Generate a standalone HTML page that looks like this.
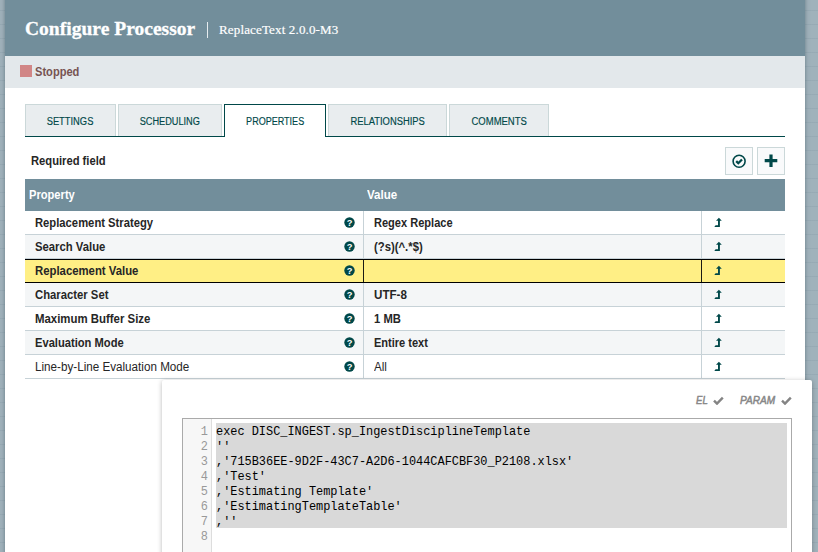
<!DOCTYPE html>
<html>
<head>
<meta charset="utf-8">
<title>Configure Processor</title>
<style>
*{box-sizing:border-box;margin:0;padding:0}
html,body{width:818px;height:552px;overflow:hidden}
body{position:relative;background:#a0b2bb;font-family:"Liberation Sans",sans-serif;font-size:12px;color:#262626}
.abs{position:absolute}
.sx{transform-origin:0 50%;display:inline-block}
#bg{left:0;top:0;width:818px;height:552px;
  background-color:#a0b2bb;
  background-image:linear-gradient(to bottom,rgba(110,132,145,.16) 1px,transparent 1px),linear-gradient(to right,rgba(110,132,145,.16) 1px,transparent 1px);
  background-size:14px 14px;background-position:6px 10px}
#dialog{left:5px;top:-10px;width:800px;height:620px;background:#fff;box-shadow:0 0 4px rgba(50,72,88,.55)}
#hdr{left:5px;top:0;width:800px;height:56px;background:#728e9b}
#title{left:25px;top:16.5px;height:24px;line-height:24px;font-family:"Liberation Serif",serif;font-weight:bold;font-size:19.5px;letter-spacing:0.02px;-webkit-text-stroke:0.3px #fff;color:#fff;white-space:nowrap}
#tdiv{left:207px;top:22px;width:1px;height:16px;background:#e6ecef}
#sub{left:219px;top:20px;height:20px;line-height:20px;font-family:"Liberation Serif",serif;font-size:13px;letter-spacing:0.15px;-webkit-text-stroke:0.2px #fff;color:#fff;white-space:nowrap}
#status{left:5px;top:56px;width:800px;height:32px;background:#e3e8eb}
#stopsq{left:20px;top:65px;width:12px;height:12px;background:#d18686}
#stoptx{left:35px;top:64px;height:16px;line-height:16px;font-weight:bold;font-size:12px;color:#775351;white-space:nowrap}
.tab{position:absolute;top:104px;height:32px;background:#e9edef;border:1px solid #cbd8d9;border-bottom:none;color:#004849;font-size:10px;text-align:center;line-height:33px;-webkit-text-stroke:0.15px #004849;white-space:nowrap;text-transform:uppercase}
.tab.sel{background:#fff;border:1px solid #004849;border-bottom:none;height:33px}
#tabline{left:25px;top:136px;width:760px;height:1px;background:#004849}
#req{left:31px;top:153px;height:16px;line-height:16px;font-weight:bold;font-size:12px;white-space:nowrap}
.btn{position:absolute;top:147px;width:28px;height:28px;background:#f9fafb;border:1px solid #cbd8d9}
#thead{left:25px;top:179px;width:760px;height:32px;background:#728e9b}
.th{position:absolute;transform-origin:0 50%;top:179px;height:32px;line-height:32px;color:#fff;font-weight:bold;font-size:12px;white-space:nowrap}
.row{position:absolute;left:25px;width:760px;height:24px;border-bottom:1px solid #c7d2d7;background:#fff}
.row.odd{background:#f4f6f7}
.row.sel{background:#ffef85;border-top:1px solid #000;border-bottom:1px solid #000}
.row .c{position:absolute;top:1px;transform-origin:0 50%;height:23px;line-height:23px;white-space:nowrap;font-size:12px;font-weight:bold}
.row.sel .c{top:0}
.row .v1,.row .v2{position:absolute;top:0;bottom:0;width:1px;background:#c7d2d7}
.row.sel .v1,.row.sel .v2{background:#1a1a14}
.row .v1{left:338px}
.row .v2{left:676px}
.row .name{left:10px}
.row .val{left:349px}
.row.norm .c{font-weight:normal}
.row svg.q{position:absolute;left:319px;top:6.2px;overflow:visible}
.row.sel svg.q{top:5.2px}
.row svg.up{position:absolute;left:689px;top:6px}
.row.sel svg.up{top:5px}
#pop{left:162px;top:380px;width:650px;height:200px;background:#fff;border-radius:2px;box-shadow:0 1px 5px rgba(0,0,0,.28)}
#ed{left:182px;top:418px;width:610px;height:160px;border:1px solid #aaa;background:#fff}
#gut{left:183px;top:419px;width:29px;height:150px;background:#f7f7f7;border-right:1px solid #ddd}
#selbg{left:216px;top:423px;width:571px;height:105px;background:#d9d9d9}
.ln{position:absolute;left:183px;width:25px;text-align:right;height:15px;line-height:15px;font-family:"Liberation Mono","DejaVu Sans Mono",monospace;font-size:11.91px;color:#999}
.cl{position:absolute;left:216px;height:15px;line-height:15px;font-family:"Liberation Mono","DejaVu Sans Mono",monospace;font-size:11.91px;color:#000;white-space:pre}
.flag{position:absolute;top:392px;height:16px;line-height:16px;font-size:11px;font-style:italic;font-weight:normal;-webkit-text-stroke:0.5px #878787;color:#878787;white-space:nowrap;transform-origin:0 50%}
</style>
</head>
<body>
<div id="bg" class="abs"></div>
<div id="dialog" class="abs"></div>
<div id="hdr" class="abs"></div>
<div id="title" class="abs">Configure Processor</div>
<div id="tdiv" class="abs"></div>
<div id="sub" class="abs">ReplaceText 2.0.0-M3</div>
<div id="status" class="abs"></div>
<div id="stopsq" class="abs"></div>
<div id="stoptx" class="abs sx" style="transform:scaleX(.925)">Stopped</div>

<div class="tab" style="left:25px;width:91px"><span style="display:inline-block;transform:scaleX(0.934)">Settings</span></div>
<div class="tab" style="left:118px;width:104px"><span style="display:inline-block;transform:scaleX(0.918)">Scheduling</span></div>
<div id="tabline" class="abs"></div>
<div class="tab sel" style="left:224px;width:102px"><span style="display:inline-block;transform:scaleX(0.903)">Properties</span></div>
<div class="tab" style="left:328px;width:119px"><span style="display:inline-block;transform:scaleX(0.938)">Relationships</span></div>
<div class="tab" style="left:449px;width:100px"><span style="display:inline-block;transform:scaleX(0.948)">Comments</span></div>

<div id="req" class="abs sx" style="transform:scaleX(.9325)">Required field</div>
<div class="btn" style="left:725px">
 <svg width="26" height="26" viewBox="0 0 26 26" style="position:absolute;left:0;top:0"><circle cx="13.1" cy="13.2" r="6" fill="none" stroke="#004849" stroke-width="1.6"/><path d="M10.2 13.1l2.1 2.1 3.7-3.7" fill="none" stroke="#004849" stroke-width="2.3"/></svg>
</div>
<div class="btn" style="left:757px">
 <svg width="26" height="26" viewBox="0 0 26 26" style="position:absolute;left:0;top:0"><path d="M6.7 12.7h12.6M13 6.4v12.6" fill="none" stroke="#004849" stroke-width="3.2"/></svg>
</div>

<div id="thead" class="abs"></div>
<div class="th" style="left:29px;transform:scaleX(.928)">Property</div>
<div class="th" style="left:367px;transform:scaleX(.96)">Value</div>

<div class="row" style="top:211px"><span class="c name" style="transform:scaleX(0.937)">Replacement Strategy</span><span class="c val" style="transform:scaleX(0.920)">Regex Replace</span><i class="v1"></i><i class="v2"></i>
<svg class="q" width="11" height="11" viewBox="0 0 11 11"><circle cx="5.5" cy="5.5" r="5.2" fill="#004849"/><text x="5.5" y="8.9" font-family="Liberation Sans, sans-serif" font-weight="bold" font-size="9.3" fill="#fff" text-anchor="middle">?</text></svg>
<svg class="up" width="9" height="11" viewBox="0 0 9 11"><path d="M4.9 0.7L7.8 3.8H5.9V9.9H0.3L1.6 8.3H4V3.8H2Z" fill="#004849"/></svg></div>

<div class="row odd" style="top:235px"><span class="c name" style="transform:scaleX(0.941)">Search Value</span><span class="c val" style="transform:scaleX(0.942)">(?s)(^.*$)</span><i class="v1"></i><i class="v2"></i>
<svg class="q" width="11" height="11" viewBox="0 0 11 11"><circle cx="5.5" cy="5.5" r="5.2" fill="#004849"/><text x="5.5" y="8.9" font-family="Liberation Sans, sans-serif" font-weight="bold" font-size="9.3" fill="#fff" text-anchor="middle">?</text></svg>
<svg class="up" width="9" height="11" viewBox="0 0 9 11"><path d="M4.9 0.7L7.8 3.8H5.9V9.9H0.3L1.6 8.3H4V3.8H2Z" fill="#004849"/></svg></div>

<div class="row sel" style="top:259px"><span class="c name" style="transform:scaleX(0.945)">Replacement Value</span><span class="c val"></span><i class="v1"></i><i class="v2"></i>
<svg class="q" width="11" height="11" viewBox="0 0 11 11"><circle cx="5.5" cy="5.5" r="5.2" fill="#004849"/><text x="5.5" y="8.9" font-family="Liberation Sans, sans-serif" font-weight="bold" font-size="9.3" fill="#fff" text-anchor="middle">?</text></svg>
<svg class="up" width="9" height="11" viewBox="0 0 9 11"><path d="M4.9 0.7L7.8 3.8H5.9V9.9H0.3L1.6 8.3H4V3.8H2Z" fill="#004849"/></svg></div>

<div class="row odd" style="top:283px"><span class="c name" style="transform:scaleX(0.941)">Character Set</span><span class="c val" style="transform:scaleX(0.968)">UTF-8</span><i class="v1"></i><i class="v2"></i>
<svg class="q" width="11" height="11" viewBox="0 0 11 11"><circle cx="5.5" cy="5.5" r="5.2" fill="#004849"/><text x="5.5" y="8.9" font-family="Liberation Sans, sans-serif" font-weight="bold" font-size="9.3" fill="#fff" text-anchor="middle">?</text></svg>
<svg class="up" width="9" height="11" viewBox="0 0 9 11"><path d="M4.9 0.7L7.8 3.8H5.9V9.9H0.3L1.6 8.3H4V3.8H2Z" fill="#004849"/></svg></div>

<div class="row" style="top:307px"><span class="c name" style="transform:scaleX(0.951)">Maximum Buffer Size</span><span class="c val" style="transform:scaleX(0.938)">1 MB</span><i class="v1"></i><i class="v2"></i>
<svg class="q" width="11" height="11" viewBox="0 0 11 11"><circle cx="5.5" cy="5.5" r="5.2" fill="#004849"/><text x="5.5" y="8.9" font-family="Liberation Sans, sans-serif" font-weight="bold" font-size="9.3" fill="#fff" text-anchor="middle">?</text></svg>
<svg class="up" width="9" height="11" viewBox="0 0 9 11"><path d="M4.9 0.7L7.8 3.8H5.9V9.9H0.3L1.6 8.3H4V3.8H2Z" fill="#004849"/></svg></div>

<div class="row odd" style="top:331px"><span class="c name" style="transform:scaleX(0.930)">Evaluation Mode</span><span class="c val" style="transform:scaleX(0.919)">Entire text</span><i class="v1"></i><i class="v2"></i>
<svg class="q" width="11" height="11" viewBox="0 0 11 11"><circle cx="5.5" cy="5.5" r="5.2" fill="#004849"/><text x="5.5" y="8.9" font-family="Liberation Sans, sans-serif" font-weight="bold" font-size="9.3" fill="#fff" text-anchor="middle">?</text></svg>
<svg class="up" width="9" height="11" viewBox="0 0 9 11"><path d="M4.9 0.7L7.8 3.8H5.9V9.9H0.3L1.6 8.3H4V3.8H2Z" fill="#004849"/></svg></div>

<div class="row norm" style="top:355px"><span class="c name" style="transform:scaleX(0.972)">Line-by-Line Evaluation Mode</span><span class="c val" style="transform:scaleX(0.969)">All</span><i class="v1"></i><i class="v2"></i>
<svg class="q" width="11" height="11" viewBox="0 0 11 11"><circle cx="5.5" cy="5.5" r="5.2" fill="#004849"/><text x="5.5" y="8.9" font-family="Liberation Sans, sans-serif" font-weight="bold" font-size="9.3" fill="#fff" text-anchor="middle">?</text></svg>
<svg class="up" width="9" height="11" viewBox="0 0 9 11"><path d="M4.9 0.7L7.8 3.8H5.9V9.9H0.3L1.6 8.3H4V3.8H2Z" fill="#004849"/></svg></div>

<div id="pop" class="abs"></div>
<div class="flag" style="left:696px;transform:scaleX(.87)">EL</div>
<svg class="abs" style="left:713px;top:396px" width="11" height="9" viewBox="0 0 11 9"><path d="M1 4.6l3 3L9.8 1.6" fill="none" stroke="#848484" stroke-width="2.4"/></svg>
<div class="flag" style="left:740px;transform:scaleX(.915)">PARAM</div>
<svg class="abs" style="left:781px;top:396px" width="11" height="9" viewBox="0 0 11 9"><path d="M1 4.6l3 3L9.8 1.6" fill="none" stroke="#848484" stroke-width="2.4"/></svg>

<div id="ed" class="abs"></div>
<div id="gut" class="abs"></div>
<div id="selbg" class="abs"></div>
<div class="ln" style="top:425px">1</div>
<div class="ln" style="top:440px">2</div>
<div class="ln" style="top:455px">3</div>
<div class="ln" style="top:470px">4</div>
<div class="ln" style="top:485px">5</div>
<div class="ln" style="top:500px">6</div>
<div class="ln" style="top:515px">7</div>
<div class="ln" style="top:530px">8</div>
<div class="cl" style="top:425px">exec DISC_INGEST.sp_IngestDisciplineTemplate</div>
<div class="cl" style="top:440px">''</div>
<div class="cl" style="top:455px">,'715B36EE-9D2F-43C7-A2D6-1044CAFCBF30_P2108.xlsx'</div>
<div class="cl" style="top:470px">,'Test'</div>
<div class="cl" style="top:485px">,'Estimating Template'</div>
<div class="cl" style="top:500px">,'EstimatingTemplateTable'</div>
<div class="cl" style="top:515px">,''</div>
</body>
</html>
